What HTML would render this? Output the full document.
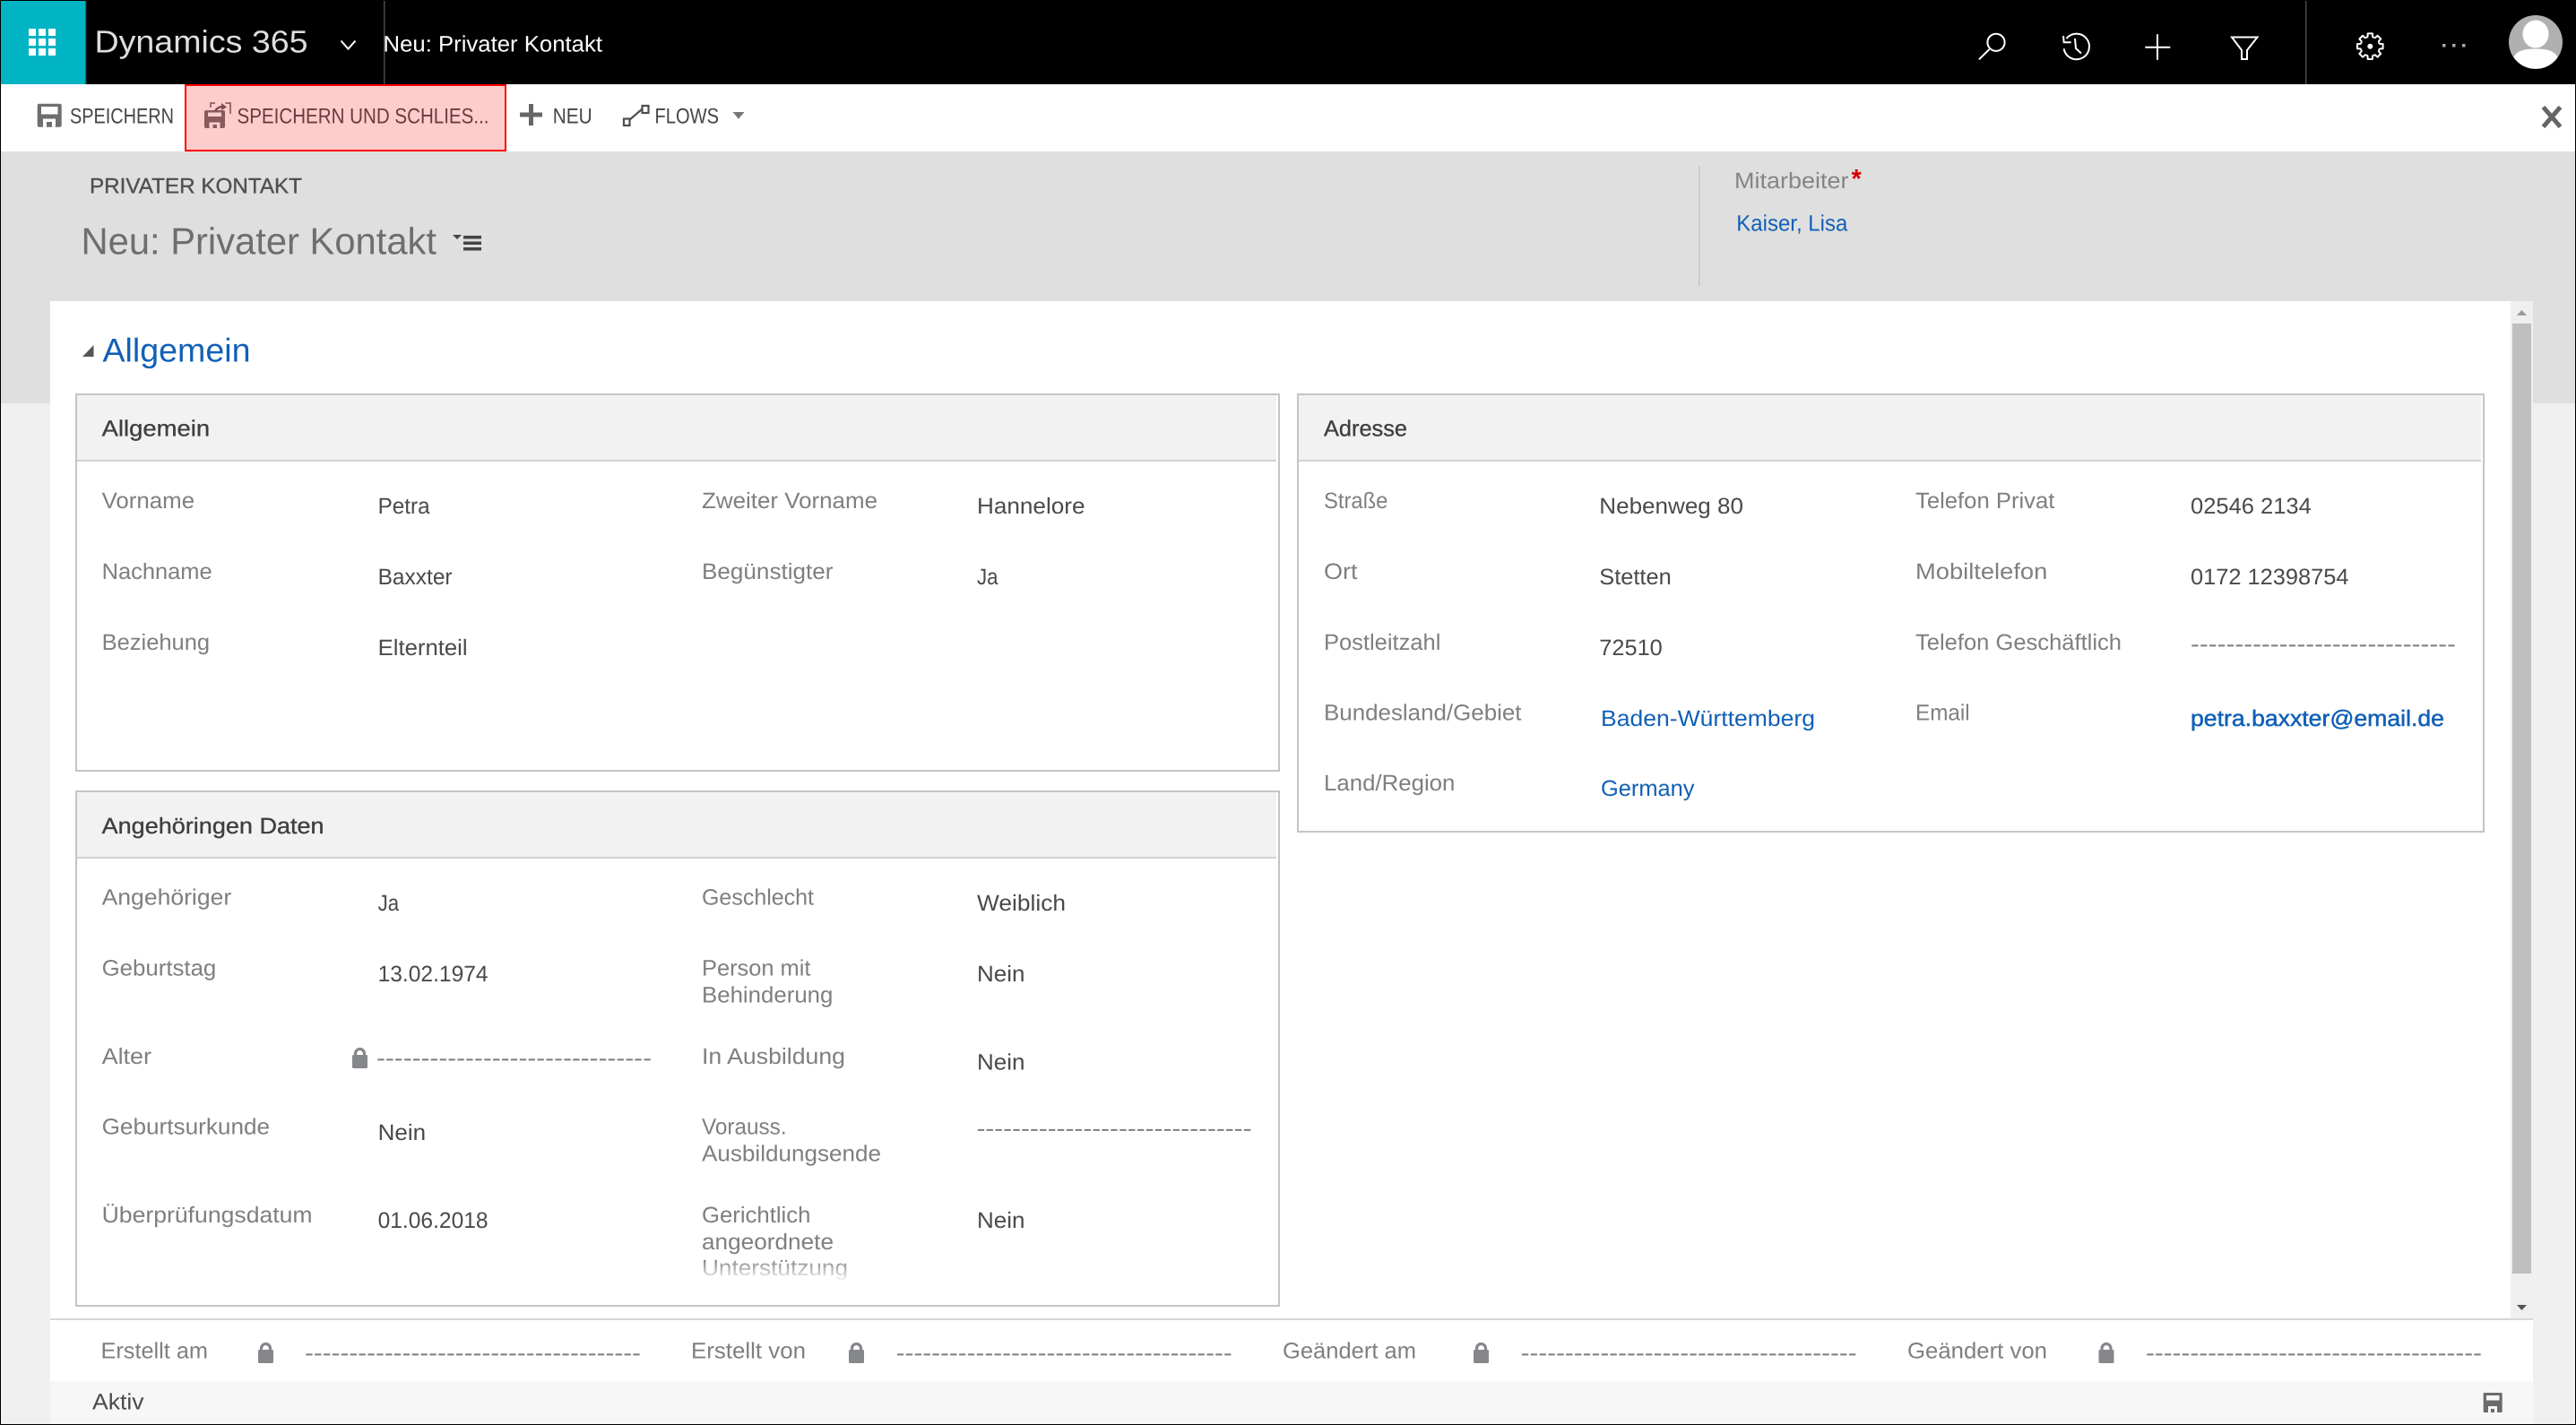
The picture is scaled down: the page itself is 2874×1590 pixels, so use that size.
<!DOCTYPE html>
<html lang="de">
<head>
<meta charset="utf-8">
<title>Neu: Privater Kontakt - Dynamics 365</title>
<style>
html,body{margin:0;padding:0;width:2874px;height:1590px;overflow:hidden;background:#f0f0f0}
svg{display:block;position:absolute;left:0;top:0}
text{font-family:"Liberation Sans",Arial,sans-serif;text-rendering:geometricPrecision;white-space:pre}
.l{font-size:25px;fill:#7f7f7f}
.v{font-size:25px;fill:#4a4a4a}
.a{font-size:25px;fill:#1160b7}
.h{font-size:25px;fill:#3f3f3f;stroke:#3f3f3f;stroke-width:.35px}
.d{font-size:25px;fill:#7a7a7a}
.b{font-size:24px;fill:#454545}
.r{font-size:24px;fill:#6c3a3a}
.ln{fill:none;stroke:#fff;stroke-width:2}
.lk{fill:none;stroke:#86878a;stroke-width:3.2}
.lb{fill:#86878a}
</style>
</head>
<body>
<svg xmlns="http://www.w3.org/2000/svg" width="2874" height="1590" viewBox="0 0 2874 1590">
<defs>
<linearGradient id="fade" x1="0" y1="0" x2="0" y2="1"><stop offset="0" stop-color="#fff" stop-opacity="0"/><stop offset="1" stop-color="#fff" stop-opacity="1"/></linearGradient>
</defs>
<!-- backgrounds -->
<rect width="2874" height="1590" fill="#f0f0f0"/>
<rect y="169" width="2874" height="281" fill="#dfdfdf"/>
<rect width="2874" height="94" fill="#000"/>
<rect y="94" width="2874" height="75" fill="#fff"/>
<rect x="56" y="336" width="2770" height="1205" fill="#fff"/>
<rect x="56" y="1541" width="2770" height="48" fill="#f7f7f7"/>

<!-- top bar -->
<rect x="1" y="1" width="94" height="93" fill="#01b4c4"/>
<rect x="95" y="1" width="1.5" height="93" fill="#4a4a4a"/>
<rect x="428" y="1" width="1.5" height="93" fill="#4a4a4a"/>
<rect x="2572" y="1" width="1.5" height="93" fill="#4a4a4a"/>
<g fill="#fff">
<rect x="32" y="32" width="8" height="8"/><rect x="43" y="32" width="8" height="8"/><rect x="54" y="32" width="8" height="8"/>
<rect x="32" y="43" width="8" height="8"/><rect x="43" y="43" width="8" height="8"/><rect x="54" y="43" width="8" height="8"/>
<rect x="32" y="54" width="8" height="8"/><rect x="43" y="54" width="8" height="8"/><rect x="54" y="54" width="8" height="8"/>
</g>
<text x="105.5" y="58.5" font-size="35" fill="#dedede" textLength="238" lengthAdjust="spacingAndGlyphs">Dynamics 365</text>
<path d="M380.5 45.5L388.5 54.5L396.5 45.5" class="ln"/>
<text x="427.5" y="57.5" font-size="25" fill="#fff" textLength="244.5" lengthAdjust="spacingAndGlyphs">Neu: Privater Kontakt</text>

<circle cx="2227" cy="47.3" r="9.6" class="ln"/>
<path d="M2219.5 55L2208 66.3" class="ln"/>
<path d="M2305.5 43A14.3 14.3 0 1 1 2302.6 54.3" class="ln"/>
<path d="M2302 40L2302.7 47.3L2310.7 47.3" class="ln"/>
<path d="M2315 43L2316 54L2322 59.5" class="ln"/>
<path d="M2393.3 52.7H2421.3M2407 38.3V66.7" class="ln"/>
<path d="M2490 41.5H2518.5L2507 56V66H2501V56Z" class="ln"/>
<g transform="translate(2644.3 51.7)" class="ln" stroke-linejoin="round">
<path d="M-4-9.7L-2.8-10.8L-2.6-14.3L2.6-14.3L2.8-10.8L4-9.7"/>
<path transform="rotate(45)" d="M-4-9.7L-2.8-10.8L-2.6-14.3L2.6-14.3L2.8-10.8L4-9.7"/>
<path transform="rotate(90)" d="M-4-9.7L-2.8-10.8L-2.6-14.3L2.6-14.3L2.8-10.8L4-9.7"/>
<path transform="rotate(135)" d="M-4-9.7L-2.8-10.8L-2.6-14.3L2.6-14.3L2.8-10.8L4-9.7"/>
<path transform="rotate(180)" d="M-4-9.7L-2.8-10.8L-2.6-14.3L2.6-14.3L2.8-10.8L4-9.7"/>
<path transform="rotate(225)" d="M-4-9.7L-2.8-10.8L-2.6-14.3L2.6-14.3L2.8-10.8L4-9.7"/>
<path transform="rotate(270)" d="M-4-9.7L-2.8-10.8L-2.6-14.3L2.6-14.3L2.8-10.8L4-9.7"/>
<path transform="rotate(315)" d="M-4-9.7L-2.8-10.8L-2.6-14.3L2.6-14.3L2.8-10.8L4-9.7"/>
</g>
<circle cx="2644.3" cy="51.7" r="3" fill="#fff"/>
<g fill="#a8a8a8"><rect x="2725" y="49" width="3.5" height="3.5"/><rect x="2736" y="49" width="3.5" height="3.5"/><rect x="2747" y="49" width="3.5" height="3.5"/></g>
<circle cx="2829" cy="47" r="30" fill="#b0b0b0"/>
<ellipse cx="2829" cy="38" rx="14.5" ry="15.5" fill="#fff"/>
<path d="M2804.5 64C2808 56 2818 54.5 2829 54.5C2840 54.5 2850 56 2853.5 64A30 30 0 0 1 2804.5 64Z" fill="#fff"/>

<!-- toolbar -->
<g>
<rect x="41.7" y="115.7" width="27" height="26" rx="2" fill="#6e6e6e"/>
<rect x="46" y="119" width="18.5" height="8.5" fill="#fff"/>
<rect x="48" y="132.5" width="14" height="9.2" fill="#fff"/>
<rect x="52" y="136" width="6" height="5.7" fill="#6e6e6e"/>
</g>
<text class="b" x="78" y="137.5" textLength="116" lengthAdjust="spacingAndGlyphs">SPEICHERN</text>
<rect x="207" y="95" width="357" height="73" fill="#ffcccc" stroke="#ff0000" stroke-width="2"/>
<g>
<rect x="228" y="123" width="23" height="20" rx="2" fill="#8a5a5a"/>
<rect x="232" y="125.5" width="15" height="4.5" fill="#f8cfcf"/>
<rect x="233.5" y="136.5" width="12" height="6.5" fill="#f8cfcf"/>
<rect x="237.5" y="139" width="4.5" height="4" fill="#8a5a5a"/>
<path d="M235 120V115H240M251.5 115H257V127" fill="none" stroke="#8d5c5c" stroke-width="1.7"/>
<path d="M240 124Q243 118.5 250 119" fill="none" stroke="#7f4c4c" stroke-width="2.4"/>
<path d="M247 115L253 119.5L247 123Z" fill="#7f4c4c"/>
</g>
<text class="r" x="264.5" y="137.5" textLength="281" lengthAdjust="spacingAndGlyphs">SPEICHERN UND SCHLIES...</text>
<path d="M580 128H605M592.5 116V140" fill="none" stroke="#666" stroke-width="5"/>
<text class="b" x="616.7" y="137.5" textLength="44" lengthAdjust="spacingAndGlyphs">NEU</text>
<g fill="none" stroke="#4d4d4d" stroke-width="2.2">
<rect x="696" y="132.5" width="6.5" height="7.5"/>
<rect x="716.5" y="118" width="7" height="8"/>
<path d="M702 134L716 122"/>
</g>
<text class="b" x="730.5" y="137.5" textLength="71.5" lengthAdjust="spacingAndGlyphs">FLOWS</text>
<path d="M817.5 125H830.5L824 132.7Z" fill="#777"/>
<path d="M2837.5 119.5L2856.5 141.5M2856.5 119.5L2837.5 141.5" fill="none" stroke="#666" stroke-width="5"/>

<!-- record header -->
<text x="100" y="215.7" font-size="24" fill="#505050" stroke="#505050" stroke-width=".35" textLength="237" lengthAdjust="spacingAndGlyphs">PRIVATER KONTAKT</text>
<text x="90.5" y="283.3" font-size="42" fill="#6e6e6e" textLength="396.5" lengthAdjust="spacingAndGlyphs">Neu: Privater Kontakt</text>
<path d="M505 262H515L510 267Z" fill="#444"/>
<g fill="#444"><rect x="517" y="263" width="20" height="3.5"/><rect x="517" y="269.5" width="20" height="3.5"/><rect x="517" y="276" width="20" height="3.5"/></g>
<rect x="1895" y="185" width="1.5" height="134" fill="#c4c4c4"/>
<text x="1935" y="210" font-size="25" fill="#858585" textLength="127.5" lengthAdjust="spacingAndGlyphs">Mitarbeiter</text>
<text x="2065.5" y="209" font-size="29" font-weight="bold" fill="#d40000">*</text>
<text class="a" x="1937.3" y="257.3" textLength="124" lengthAdjust="spacingAndGlyphs">Kaiser, Lisa</text>

<!-- section heading -->
<path d="M104.5 385V398H92Z" fill="#555"/>
<text x="114.5" y="403.3" font-size="37" fill="#1160b7" textLength="165" lengthAdjust="spacingAndGlyphs">Allgemein</text>

<!-- panel Allgemein -->
<rect x="85" y="440" width="1342" height="420" fill="#fff" stroke="#c2c5c8" stroke-width="2"/>
<rect x="86" y="441" width="1338" height="72" fill="#f2f2f2"/>
<rect x="86" y="513" width="1338" height="2" fill="#d2d2d2"/>
<text class="h" x="113.6" y="486.7" textLength="120.5" lengthAdjust="spacingAndGlyphs">Allgemein</text>
<text class="l" x="113.6" y="567" textLength="103.5" lengthAdjust="spacingAndGlyphs">Vorname</text>
<text class="v" x="421.6" y="573" textLength="58" lengthAdjust="spacingAndGlyphs">Petra</text>
<text class="l" x="783" y="567" textLength="196" lengthAdjust="spacingAndGlyphs">Zweiter Vorname</text>
<text class="v" x="1090" y="573" textLength="120.5" lengthAdjust="spacingAndGlyphs">Hannelore</text>
<text class="l" x="113.6" y="646" textLength="123" lengthAdjust="spacingAndGlyphs">Nachname</text>
<text class="v" x="421.6" y="652" textLength="83" lengthAdjust="spacingAndGlyphs">Baxxter</text>
<text class="l" x="783" y="646" textLength="146.5" lengthAdjust="spacingAndGlyphs">Begünstigter</text>
<text class="v" x="1090" y="652" textLength="23.5" lengthAdjust="spacingAndGlyphs">Ja</text>
<text class="l" x="113.6" y="725" textLength="120.5" lengthAdjust="spacingAndGlyphs">Beziehung</text>
<text class="v" x="421.6" y="731" textLength="100" lengthAdjust="spacingAndGlyphs">Elternteil</text>

<!-- panel Angehörigen Daten -->
<rect x="85" y="883" width="1342" height="574" fill="#fff" stroke="#c2c5c8" stroke-width="2"/>
<rect x="86" y="884" width="1338" height="72" fill="#f2f2f2"/>
<rect x="86" y="956" width="1338" height="2" fill="#d2d2d2"/>
<text class="h" x="113.6" y="930" textLength="248" lengthAdjust="spacingAndGlyphs">Angehöringen Daten</text>
<text class="l" x="113.6" y="1009.5" textLength="144.6" lengthAdjust="spacingAndGlyphs">Angehöriger</text>
<text class="v" x="421.6" y="1016" textLength="23.5" lengthAdjust="spacingAndGlyphs">Ja</text>
<text class="l" x="783" y="1009.5" textLength="125" lengthAdjust="spacingAndGlyphs">Geschlecht</text>
<text class="v" x="1090" y="1016" textLength="99" lengthAdjust="spacingAndGlyphs">Weiblich</text>
<text class="l" x="113.6" y="1088.5" textLength="127.7" lengthAdjust="spacingAndGlyphs">Geburtstag</text>
<text class="v" x="421.6" y="1095" textLength="123" lengthAdjust="spacingAndGlyphs">13.02.1974</text>
<text class="l" x="783" y="1088.5" textLength="121.4" lengthAdjust="spacingAndGlyphs">Person mit</text>
<text class="l" x="783" y="1118.5" textLength="146.4" lengthAdjust="spacingAndGlyphs">Behinderung</text>
<text class="v" x="1090" y="1095" textLength="53.5" lengthAdjust="spacingAndGlyphs">Nein</text>
<text class="l" x="113.6" y="1187" textLength="55.4" lengthAdjust="spacingAndGlyphs">Alter</text>
<path class="lk" d="M396.5 1178V1175.5a5 5 0 0 1 10 0V1178"/>
<rect class="lb" x="393" y="1177" width="17" height="15" rx="1.5"/>
<text class="d" x="420" y="1189" textLength="307" lengthAdjust="spacingAndGlyphs">-------------------------------</text>
<text class="l" x="783" y="1187" textLength="160" lengthAdjust="spacingAndGlyphs">In Ausbildung</text>
<text class="v" x="1090" y="1193.5" textLength="53.5" lengthAdjust="spacingAndGlyphs">Nein</text>
<text class="l" x="113.6" y="1265.5" textLength="187.5" lengthAdjust="spacingAndGlyphs">Geburtsurkunde</text>
<text class="v" x="421.6" y="1272" textLength="53.5" lengthAdjust="spacingAndGlyphs">Nein</text>
<text class="l" x="783" y="1265.5" textLength="94.6" lengthAdjust="spacingAndGlyphs">Vorauss.</text>
<text class="l" x="783" y="1295.5" textLength="200" lengthAdjust="spacingAndGlyphs">Ausbildungsende</text>
<text class="d" x="1089.5" y="1267.5" textLength="307" lengthAdjust="spacingAndGlyphs">-------------------------------</text>
<text class="l" x="113.6" y="1364" textLength="235" lengthAdjust="spacingAndGlyphs">Überprüfungsdatum</text>
<text class="v" x="421.6" y="1370" textLength="123" lengthAdjust="spacingAndGlyphs">01.06.2018</text>
<text class="l" x="783" y="1364" textLength="121.4" lengthAdjust="spacingAndGlyphs">Gerichtlich</text>
<text class="l" x="783" y="1394" textLength="147" lengthAdjust="spacingAndGlyphs">angeordnete</text>
<text class="l" x="783" y="1423" textLength="163" lengthAdjust="spacingAndGlyphs">Unterstützung</text>
<rect x="780" y="1404" width="180" height="27" fill="url(#fade)"/>
<text class="v" x="1090" y="1370" textLength="53.5" lengthAdjust="spacingAndGlyphs">Nein</text>

<!-- panel Adresse -->
<rect x="1448" y="440" width="1323" height="488" fill="#fff" stroke="#c2c5c8" stroke-width="2"/>
<rect x="1449" y="441" width="1319" height="72" fill="#f2f2f2"/>
<rect x="1449" y="513" width="1319" height="2" fill="#d2d2d2"/>
<text class="h" x="1477" y="486.7" textLength="93" lengthAdjust="spacingAndGlyphs">Adresse</text>
<text class="l" x="1477" y="567" textLength="71.4" lengthAdjust="spacingAndGlyphs">Straße</text>
<text class="v" x="1784.3" y="573" textLength="160.7" lengthAdjust="spacingAndGlyphs">Nebenweg 80</text>
<text class="l" x="2137" y="567" textLength="155.4" lengthAdjust="spacingAndGlyphs">Telefon Privat</text>
<text class="v" x="2444" y="573" textLength="134.8" lengthAdjust="spacingAndGlyphs">02546 2134</text>
<text class="l" x="1477" y="646" textLength="37.5" lengthAdjust="spacingAndGlyphs">Ort</text>
<text class="v" x="1784.3" y="652" textLength="80.4" lengthAdjust="spacingAndGlyphs">Stetten</text>
<text class="l" x="2137" y="646" textLength="147.3" lengthAdjust="spacingAndGlyphs">Mobiltelefon</text>
<text class="v" x="2444" y="652" textLength="176.5" lengthAdjust="spacingAndGlyphs">0172 12398754</text>
<text class="l" x="1477" y="725" textLength="130.4" lengthAdjust="spacingAndGlyphs">Postleitzahl</text>
<text class="v" x="1784.3" y="731" textLength="70.5" lengthAdjust="spacingAndGlyphs">72510</text>
<text class="l" x="2137" y="725" textLength="230" lengthAdjust="spacingAndGlyphs">Telefon Geschäftlich</text>
<text class="d" x="2444" y="727" textLength="296" lengthAdjust="spacingAndGlyphs">------------------------------</text>
<text class="l" x="1477" y="803.5" textLength="220.5" lengthAdjust="spacingAndGlyphs">Bundesland/Gebiet</text>
<text class="a" x="1786" y="810" textLength="239" lengthAdjust="spacingAndGlyphs">Baden-Württemberg</text>
<text class="l" x="2137" y="803.5" textLength="60.7" lengthAdjust="spacingAndGlyphs">Email</text>
<text class="a" x="2444" y="810" textLength="283" lengthAdjust="spacingAndGlyphs" stroke="#1160b7" stroke-width=".5">petra.baxxter@email.de</text>
<text class="l" x="1477" y="882" textLength="146.4" lengthAdjust="spacingAndGlyphs">Land/Region</text>
<text class="a" x="1786" y="888" textLength="104.5" lengthAdjust="spacingAndGlyphs">Germany</text>

<!-- scrollbar -->
<rect x="2801" y="336" width="25" height="1136" fill="#efefef"/>
<rect x="2803" y="361" width="21" height="1060" fill="#bfbfbf"/>
<path d="M2813.5 346L2819 352H2808Z" fill="#999"/>
<path d="M2808 1456H2819L2813.5 1462Z" fill="#555"/>

<!-- footer -->
<rect x="56" y="1471" width="2770" height="2" fill="#d6d6d6"/>
<text class="l" x="112.5" y="1515.7" textLength="119.5" lengthAdjust="spacingAndGlyphs">Erstellt am</text>
<path class="lk" d="M291.5 1507V1504.5a5 5 0 0 1 10 0V1507"/>
<rect class="lb" x="288" y="1506" width="17" height="15" rx="1.5"/>
<text class="d" x="340" y="1518" textLength="375" lengthAdjust="spacingAndGlyphs">--------------------------------------</text>
<text class="l" x="771" y="1515.7" textLength="128" lengthAdjust="spacingAndGlyphs">Erstellt von</text>
<path class="lk" d="M950.5 1507V1504.5a5 5 0 0 1 10 0V1507"/>
<rect class="lb" x="947" y="1506" width="17" height="15" rx="1.5"/>
<text class="d" x="999.7" y="1518" textLength="375" lengthAdjust="spacingAndGlyphs">--------------------------------------</text>
<text class="l" x="1431" y="1515.7" textLength="149" lengthAdjust="spacingAndGlyphs">Geändert am</text>
<path class="lk" d="M1647.5 1507V1504.5a5 5 0 0 1 10 0V1507"/>
<rect class="lb" x="1644" y="1506" width="17" height="15" rx="1.5"/>
<text class="d" x="1696.6" y="1518" textLength="375" lengthAdjust="spacingAndGlyphs">--------------------------------------</text>
<text class="l" x="2128" y="1515.7" textLength="156" lengthAdjust="spacingAndGlyphs">Geändert von</text>
<path class="lk" d="M2345 1507V1504.5a5 5 0 0 1 10 0V1507"/>
<rect class="lb" x="2341.5" y="1506" width="17" height="15" rx="1.5"/>
<text class="d" x="2394" y="1518" textLength="375" lengthAdjust="spacingAndGlyphs">--------------------------------------</text>

<!-- status bar -->
<text class="v" x="103" y="1572.7" textLength="57.5" lengthAdjust="spacingAndGlyphs">Aktiv</text>
<rect x="2770.7" y="1554" width="21" height="22" rx="1" fill="#6b6b6b"/>
<rect x="2774" y="1557" width="14.5" height="5.5" fill="#f7f7f7"/>
<rect x="2776" y="1569" width="10" height="7" fill="#f7f7f7"/>
<rect x="2779" y="1572" width="4" height="4" fill="#6b6b6b"/>

<!-- window frame -->
<rect y="0" width="2874" height="1" fill="#000"/>
<rect x="0" y="0" width="1" height="1590" fill="#000"/>
<rect x="2873" y="0" width="1" height="1590" fill="#000"/>
<rect y="1589" width="2874" height="1" fill="#000"/>
</svg>
</body>
</html>
